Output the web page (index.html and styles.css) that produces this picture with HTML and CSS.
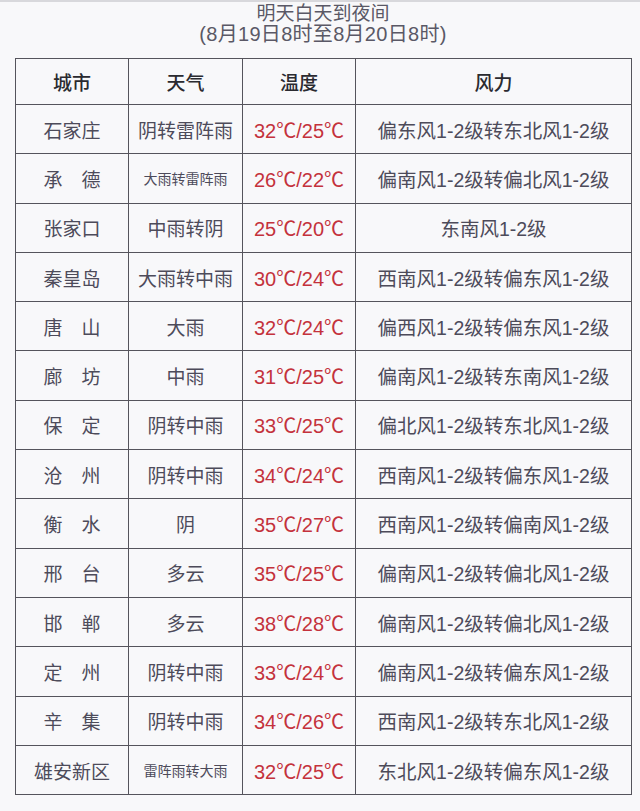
FILE: index.html
```html
<!DOCTYPE html>
<html lang="zh">
<head>
<meta charset="utf-8">
<link rel="stylesheet" href="styles.css">
</head>
<body>
<div class="page">
  <div class="title">
    <div class="t1">明天白天到夜间</div>
    <div class="t2">(8月19日8时至8月20日8时)</div>
  </div>
  <table class="wx">
    <colgroup><col class="c1"><col class="c2"><col class="c3"><col class="c4"></colgroup>
    <thead>
      <tr><th>城市</th><th>天气</th><th>温度</th><th>风力</th></tr>
    </thead>
    <tbody>
      <tr><td>石家庄</td><td>阴转雷阵雨</td><td class="temp">32℃/25℃</td><td>偏东风1-2级转东北风1-2级</td></tr>
      <tr><td>承　德</td><td class="small">大雨转雷阵雨</td><td class="temp">26℃/22℃</td><td>偏南风1-2级转偏北风1-2级</td></tr>
      <tr><td>张家口</td><td>中雨转阴</td><td class="temp">25℃/20℃</td><td>东南风1-2级</td></tr>
      <tr><td>秦皇岛</td><td>大雨转中雨</td><td class="temp">30℃/24℃</td><td>西南风1-2级转偏东风1-2级</td></tr>
      <tr><td>唐　山</td><td>大雨</td><td class="temp">32℃/24℃</td><td>偏西风1-2级转偏东风1-2级</td></tr>
      <tr><td>廊　坊</td><td>中雨</td><td class="temp">31℃/25℃</td><td>偏南风1-2级转东南风1-2级</td></tr>
      <tr><td>保　定</td><td>阴转中雨</td><td class="temp">33℃/25℃</td><td>偏北风1-2级转东北风1-2级</td></tr>
      <tr><td>沧　州</td><td>阴转中雨</td><td class="temp">34℃/24℃</td><td>西南风1-2级转偏东风1-2级</td></tr>
      <tr><td>衡　水</td><td>阴</td><td class="temp">35℃/27℃</td><td>西南风1-2级转偏南风1-2级</td></tr>
      <tr><td>邢　台</td><td>多云</td><td class="temp">35℃/25℃</td><td>偏南风1-2级转偏北风1-2级</td></tr>
      <tr><td>邯　郸</td><td>多云</td><td class="temp">38℃/28℃</td><td>偏南风1-2级转偏北风1-2级</td></tr>
      <tr><td>定　州</td><td>阴转中雨</td><td class="temp">33℃/24℃</td><td>偏南风1-2级转偏东风1-2级</td></tr>
      <tr><td>辛　集</td><td>阴转中雨</td><td class="temp">34℃/26℃</td><td>西南风1-2级转东北风1-2级</td></tr>
      <tr><td>雄安新区</td><td class="small">雷阵雨转大雨</td><td class="temp">32℃/25℃</td><td>东北风1-2级转偏东风1-2级</td></tr>
    </tbody>
  </table>
</div>
</body>
</html>
```

FILE: styles.css
```css
html, body {
  margin: 0;
  padding: 0;
  background: #f8f8fa;
}
.page {
  width: 640px;
  height: 811px;
  box-sizing: border-box;
  border-top: 2px solid #d8d8dc;
  padding: 0 9px 0 15px;
  font-family: "Liberation Sans", "Noto Sans CJK SC", sans-serif;
  color: #4d4b5a;
}
.title {
  text-align: center;
  font-size: 19px;
  line-height: 21px;
  color: #5a5866;
  padding-top: 1px;
  height: 55px;
}
.title .t2 {
  font-size: 20px;
  letter-spacing: 0.3px;
}
.wx {
  border-collapse: collapse;
  width: 616px;
  table-layout: fixed;
}
.c1 { width: 113px; }
.c2 { width: 114px; }
.c3 { width: 113px; }
.c4 { width: 276px; }
.wx th, .wx td {
  border: 1.5px solid #55545c;
  text-align: center;
  padding: 0;
  font-size: 19px;
}
.wx th {
  height: 45px;
  font-weight: 500;
  color: #2a2a30;
}
.wx td {
  height: 48.3px;
}
.wx td.small {
  font-size: 14px;
}
.wx td.temp {
  color: #c4323c;
  font-size: 20px;
}
.wx td:last-child {
  font-size: 19.5px;
}
```
